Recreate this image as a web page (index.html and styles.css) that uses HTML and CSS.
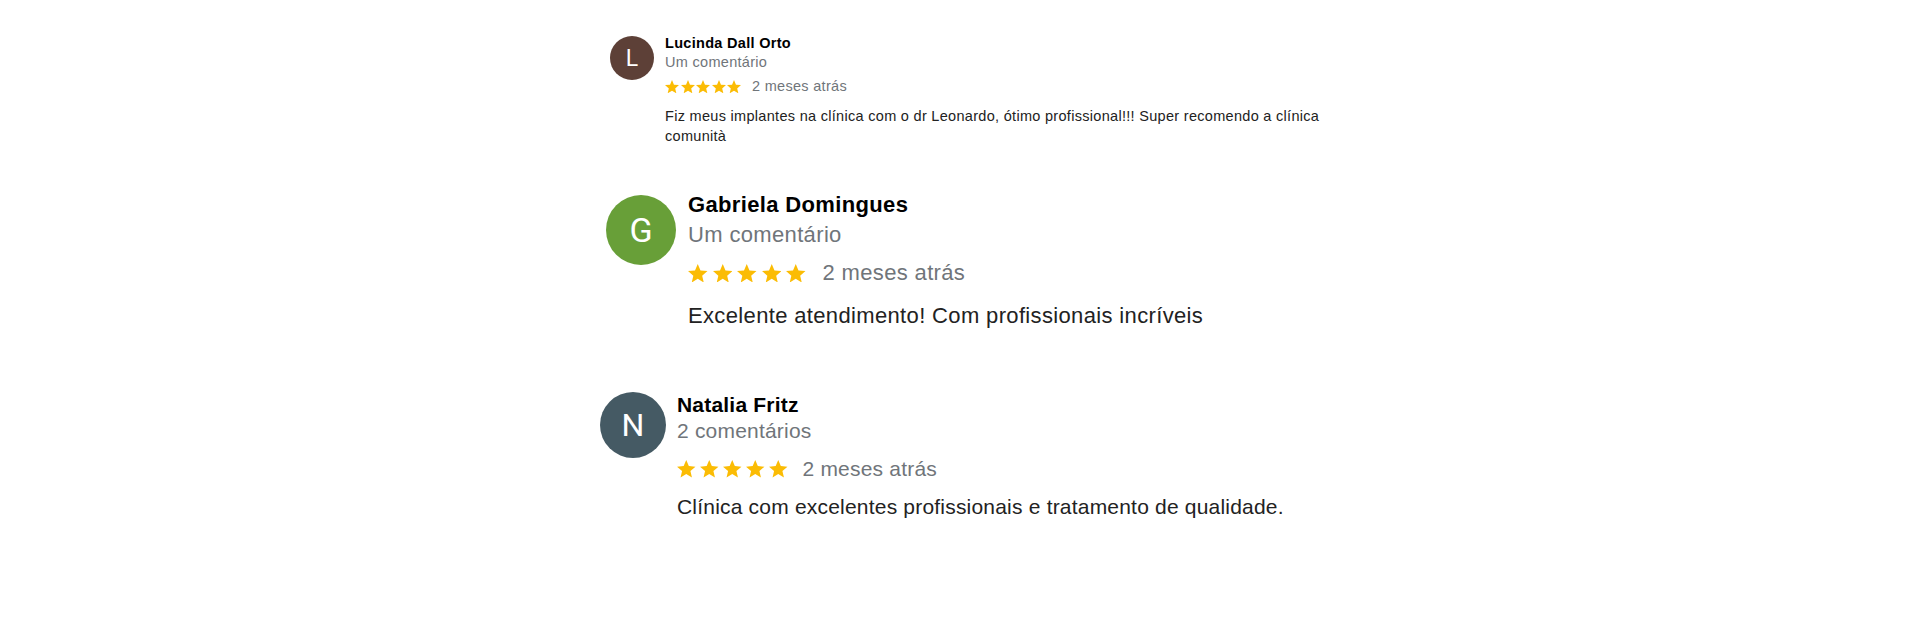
FILE: index.html
```html
<!DOCTYPE html>
<html lang="pt-BR">
<head>
    <meta charset="UTF-8">
    <meta name="viewport" content="width=device-width, initial-scale=1.0">
    <title>Avaliações</title>
    <link rel="stylesheet" href="styles.css">
</head>
<body>
    <div class="reviews">
        <div class="review review-sm">
            <div class="avatar">L</div>
            <div class="review-body">
                <div class="name">Lucinda Dall Orto</div>
                <div class="meta">Um comentário</div>
                <div class="rating">
                    <div class="stars">
                        <svg class="star" viewBox="2 2 20 19"><path d="M12 17.27L18.18 21l-1.64-7.03L22 9.24l-7.19-.61L12 2 9.19 8.63 2 9.24l5.46 4.73L5.82 21z"/></svg>
                        <svg class="star" viewBox="2 2 20 19"><path d="M12 17.27L18.18 21l-1.64-7.03L22 9.24l-7.19-.61L12 2 9.19 8.63 2 9.24l5.46 4.73L5.82 21z"/></svg>
                        <svg class="star" viewBox="2 2 20 19"><path d="M12 17.27L18.18 21l-1.64-7.03L22 9.24l-7.19-.61L12 2 9.19 8.63 2 9.24l5.46 4.73L5.82 21z"/></svg>
                        <svg class="star" viewBox="2 2 20 19"><path d="M12 17.27L18.18 21l-1.64-7.03L22 9.24l-7.19-.61L12 2 9.19 8.63 2 9.24l5.46 4.73L5.82 21z"/></svg>
                        <svg class="star" viewBox="2 2 20 19"><path d="M12 17.27L18.18 21l-1.64-7.03L22 9.24l-7.19-.61L12 2 9.19 8.63 2 9.24l5.46 4.73L5.82 21z"/></svg>
                    </div>
                    <span class="meta">2 meses atrás</span>
                </div>
                <p class="text">Fiz meus implantes na clínica com o dr Leonardo, ótimo profissional!!! Super recomendo a clínica comunità</p>
            </div>
        </div>

        <div class="review review-lg">
            <div class="avatar">G</div>
            <div class="review-body">
                <div class="name">Gabriela Domingues</div>
                <div class="meta">Um comentário</div>
                <div class="rating">
                    <div class="stars">
                        <svg class="star" viewBox="2 2 20 19"><path d="M12 17.27L18.18 21l-1.64-7.03L22 9.24l-7.19-.61L12 2 9.19 8.63 2 9.24l5.46 4.73L5.82 21z"/></svg>
                        <svg class="star" viewBox="2 2 20 19"><path d="M12 17.27L18.18 21l-1.64-7.03L22 9.24l-7.19-.61L12 2 9.19 8.63 2 9.24l5.46 4.73L5.82 21z"/></svg>
                        <svg class="star" viewBox="2 2 20 19"><path d="M12 17.27L18.18 21l-1.64-7.03L22 9.24l-7.19-.61L12 2 9.19 8.63 2 9.24l5.46 4.73L5.82 21z"/></svg>
                        <svg class="star" viewBox="2 2 20 19"><path d="M12 17.27L18.18 21l-1.64-7.03L22 9.24l-7.19-.61L12 2 9.19 8.63 2 9.24l5.46 4.73L5.82 21z"/></svg>
                        <svg class="star" viewBox="2 2 20 19"><path d="M12 17.27L18.18 21l-1.64-7.03L22 9.24l-7.19-.61L12 2 9.19 8.63 2 9.24l5.46 4.73L5.82 21z"/></svg>
                    </div>
                    <span class="meta">2 meses atrás</span>
                </div>
                <p class="text">Excelente atendimento! Com profissionais incríveis</p>
            </div>
        </div>

        <div class="review review-md">
            <div class="avatar">N</div>
            <div class="review-body">
                <div class="name">Natalia Fritz</div>
                <div class="meta">2 comentários</div>
                <div class="rating">
                    <div class="stars">
                        <svg class="star" viewBox="2 2 20 19"><path d="M12 17.27L18.18 21l-1.64-7.03L22 9.24l-7.19-.61L12 2 9.19 8.63 2 9.24l5.46 4.73L5.82 21z"/></svg>
                        <svg class="star" viewBox="2 2 20 19"><path d="M12 17.27L18.18 21l-1.64-7.03L22 9.24l-7.19-.61L12 2 9.19 8.63 2 9.24l5.46 4.73L5.82 21z"/></svg>
                        <svg class="star" viewBox="2 2 20 19"><path d="M12 17.27L18.18 21l-1.64-7.03L22 9.24l-7.19-.61L12 2 9.19 8.63 2 9.24l5.46 4.73L5.82 21z"/></svg>
                        <svg class="star" viewBox="2 2 20 19"><path d="M12 17.27L18.18 21l-1.64-7.03L22 9.24l-7.19-.61L12 2 9.19 8.63 2 9.24l5.46 4.73L5.82 21z"/></svg>
                        <svg class="star" viewBox="2 2 20 19"><path d="M12 17.27L18.18 21l-1.64-7.03L22 9.24l-7.19-.61L12 2 9.19 8.63 2 9.24l5.46 4.73L5.82 21z"/></svg>
                    </div>
                    <span class="meta">2 meses atrás</span>
                </div>
                <p class="text">Clínica com excelentes profissionais e tratamento de qualidade.</p>
            </div>
        </div>
    </div>
</body>
</html>
```

FILE: styles.css
```css
body {
    margin: 0;
    background-color: #fff;
    font-family: "Liberation Sans", Arial, sans-serif;
}
.reviews {
    display: flex;
    flex-direction: column;
    align-items: flex-start;
    padding: 34px 0 0 600px;
}
.review {
    display: flex;
    align-items: flex-start;
}
.avatar {
    flex: none;
    display: flex;
    align-items: center;
    justify-content: center;
    border-radius: 50%;
    color: #fff;
    font-family: Roboto, "Liberation Sans", sans-serif;
    letter-spacing: 0;
}
.review-body {
    display: flex;
    flex-direction: column;
}
.name {
    font-weight: bold;
    color: #000;
}
.meta {
    color: #70757a;
}
.rating {
    display: flex;
    align-items: center;
}
.stars {
    display: flex;
}
.star {
    display: block;
    fill: #fbbc04;
}
.text {
    margin: 0;
    color: #222;
}

/* Lucinda - small card */
.review-sm {
    margin-left: 10px;
    gap: 11px;
    font-size: 14.5px;
    line-height: 19px;
    letter-spacing: 0.3px;
}
.review-sm .avatar {
    width: 44px;
    height: 44px;
    margin-top: 2px;
    background-color: #5d4037;
    font-size: 23px;
}
.review-sm .rating {
    margin-top: 5px;
    gap: 11px;
}
.review-sm .stars {
    gap: 1.5px;
}
.review-sm .star {
    width: 14px;
    height: 13.3px;
}
.review-sm .text {
    margin-top: 10px;
    max-width: 690px;
    line-height: 20px;
}

/* Gabriela - large card */
.review-lg {
    margin: 44px 0 0 6px;
    gap: 12px;
    font-size: 22px;
    line-height: 30px;
    letter-spacing: 0.35px;
}
.review-lg .avatar {
    width: 70px;
    height: 70px;
    margin-top: 5px;
    background-color: #689f38;
    font-size: 34px;
}
.review-lg .rating {
    margin-top: 8px;
    gap: 17px;
}
.review-lg .stars {
    gap: 5px;
}
.review-lg .star {
    width: 19.5px;
    height: 18.5px;
}
.review-lg .text {
    margin-top: 13px;
}

/* Natalia - medium card */
.review-md {
    margin-top: 61px;
    gap: 11px;
    font-size: 21px;
    line-height: 26px;
    letter-spacing: 0.2px;
}
.review-md .avatar {
    width: 66px;
    height: 66px;
    background-color: #455a64;
    font-size: 32px;
}
.review-md .rating {
    margin-top: 12px;
    gap: 15px;
}
.review-md .stars {
    gap: 4.5px;
}
.review-md .star {
    width: 18.5px;
    height: 17.5px;
}
.review-md .text {
    margin-top: 12px;
}
```
